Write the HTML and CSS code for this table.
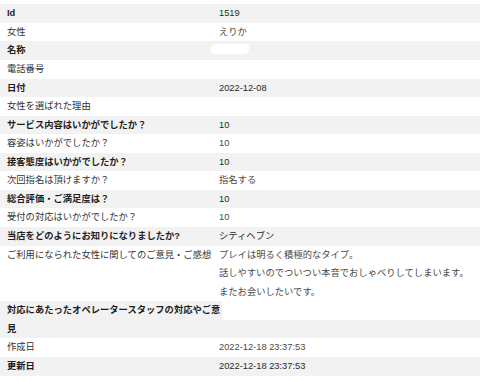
FILE: index.html
```html
<!DOCTYPE html>
<html lang="ja">
<head>
<meta charset="utf-8">
<title>詳細</title>
<link rel="stylesheet" href="styles.css">
</head>
<body>
<div class="list">
  <div class="row odd"><div class="k">Id</div><div class="v">1519</div></div>
  <div class="row"><div class="k">女性</div><div class="v">えりか</div></div>
  <div class="row odd"><div class="k">名称</div><div class="v"><span class="blot"></span></div></div>
  <div class="row"><div class="k">電話番号</div><div class="v"></div></div>
  <div class="row odd"><div class="k">日付</div><div class="v">2022-12-08</div></div>
  <div class="row"><div class="k">女性を選ばれた理由</div><div class="v"></div></div>
  <div class="row odd"><div class="k">サービス内容はいかがでしたか？</div><div class="v">10</div></div>
  <div class="row"><div class="k">容姿はいかがでしたか？</div><div class="v">10</div></div>
  <div class="row odd"><div class="k">接客態度はいかがでしたか？</div><div class="v">10</div></div>
  <div class="row"><div class="k">次回指名は頂けますか？</div><div class="v">指名する</div></div>
  <div class="row odd"><div class="k">総合評価・ご満足度は？</div><div class="v">10</div></div>
  <div class="row"><div class="k">受付の対応はいかがでしたか？</div><div class="v">10</div></div>
  <div class="row odd"><div class="k">当店をどのようにお知りになりましたか?</div><div class="v">シティヘブン</div></div>
  <div class="row"><div class="k">ご利用になられた女性に関してのご意見・ご感想</div><div class="v">プレイは明るく積極的なタイプ。<br>話しやすいのでついつい本音でおしゃべりしてしまいます。<br>またお会いしたいです。</div></div>
  <div class="row odd wide"><div class="k">対応にあたったオペレータースタッフの対応やご意見</div><div class="mask"></div></div>
  <div class="row"><div class="k">作成日</div><div class="v">2022-12-18 23:37:53</div></div>
  <div class="row odd"><div class="k">更新日</div><div class="v">2022-12-18 23:37:53</div></div>
</div>
</body>
</html>
```

FILE: styles.css
```css
html, body {
  margin: 0;
  padding: 0;
  background: #ffffff;
}
body {
  font-family: "Liberation Sans", "Noto Sans CJK JP", sans-serif;
  font-size: 9.3px;
  line-height: 18.57px;
  color: #333333;
}
.list {
  padding-top: 4.3px;
}
.row {
  display: grid;
  grid-template-columns: 213px 1fr;
}
.row.odd {
  background: #f2f2f2;
}
.k {
  padding-left: 7px;
  color: #333333;
  white-space: nowrap;
}
.v {
  padding-left: 6px;
  color: #4a4a4a;
  min-height: 18.57px;
}
.odd .k {
  font-weight: bold;
  color: #1e1e1e;
}
.odd .v {
  color: #2a2a2a;
}
.blot {
  display: inline-block;
  width: 38px;
  height: 10px;
  margin-left: -8px;
  vertical-align: -1px;
  background: #ffffff;
  border-radius: 5px 3px 5px 4px;
}
.row.wide {
  display: flex;
  align-items: flex-start;
}
.wide .k {
  width: 215px;
  flex: none;
  white-space: normal;
}
.mask {
  flex: 1;
  height: 18.57px;
  background: #ffffff;
}
```
